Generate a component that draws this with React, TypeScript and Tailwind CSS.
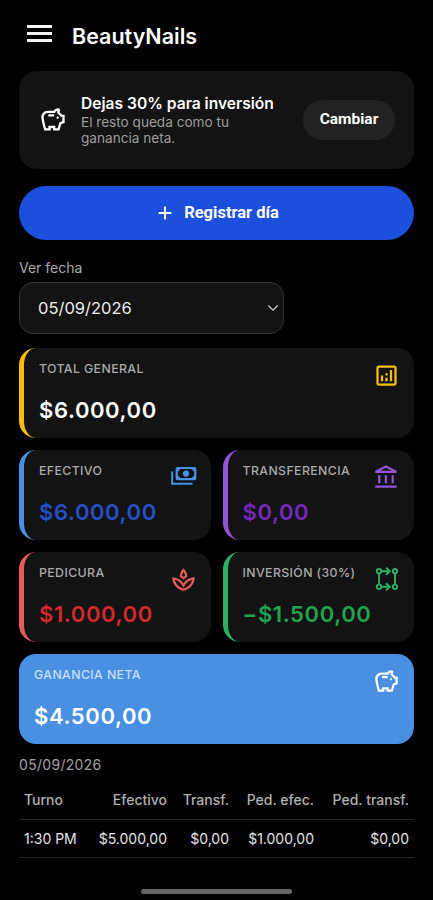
import { ReactNode } from "react";
import {
  MdAdd,
  MdOutlineAccountBalance,
  MdOutlineAnalytics,
  MdOutlineSavings,
  MdOutlineSpa,
} from "react-icons/md";

const PaymentsIcon = () => (
  <svg viewBox="0 0 26 26" className="h-[26px] w-[26px]" fill="none">
    <path d="M1.2 7.5v12.2h20.3" stroke="currentColor" strokeWidth="2" />
    <path
      fill="currentColor"
      fillRule="evenodd"
      d="M6.6 3h16.8q2 0 2 2v9.2q0 2-2 2H6.6q-2 0-2-2V5q0-2 2-2ZM9.4 5.1 6.8 7.7v3.8l2.6 2.6h11.2l2.6-2.6V7.7l-2.6-2.6Z"
    />
    <circle cx="15" cy="9.6" r="3.1" fill="currentColor" />
  </svg>
);

const FlowIcon = () => (
  <svg
    viewBox="0 0 26 26"
    className="h-[26px] w-[26px]"
    fill="none"
    stroke="currentColor"
    strokeWidth="1.9"
  >
    <circle cx="5" cy="5.2" r="2.2" />
    <circle cx="21" cy="5.2" r="2.2" />
    <circle cx="5" cy="20.8" r="2.2" />
    <circle cx="21" cy="20.8" r="2.2" />
    <path d="M5 7.4v11.2M21 7.4v11.2M7.2 5.2H15M7.2 20.8H15" />
    <path d="m12 1.6 3.8 3.6L12 8.8M12 17.2l3.8 3.6-3.8 3.6" />
  </svg>
);

interface StatCardProps {
  label: string;
  amount: string;
  icon: ReactNode;
  cardClass: string;
  labelClass?: string;
  amountClass: string;
  iconClass: string;
}

const StatCard = ({
  label,
  amount,
  icon,
  cardClass,
  labelClass = "text-[#a9a9a9]",
  amountClass,
  iconClass,
}: StatCardProps) => (
  <div
    className={`flex h-[90px] justify-between rounded-[17px] pr-[14px] pl-[15px] ${cardClass}`}
  >
    <div className="pt-[13px] whitespace-nowrap">
      <div
        className={`text-[12.3px] leading-4 font-medium tracking-[0.4px] ${labelClass}`}
      >
        {label}
      </div>
      <div
        className={`mt-[19px] text-[22px] leading-7 font-semibold tracking-[0.6px] ${amountClass}`}
      >
        {amount}
      </div>
    </div>
    <div className={`-ml-8 pt-[14px] text-[27px] ${iconClass}`}>{icon}</div>
  </div>
);

const columns = ["Turno", "Efectivo", "Transf.", "Ped. efec.", "Ped. transf."];
const rows = [["1:30 PM", "$5.000,00", "$0,00", "$1.000,00", "$0,00"]];

const App = () => {
  return (
    <div className="flex h-[900px] w-[433px] flex-col overflow-hidden bg-black px-[19px] font-['Inter',sans-serif] text-white">
      <header className="flex h-[71px] shrink-0 items-center pl-2">
        <button className="mt-[-4px] flex w-[25px] flex-col gap-[4px]">
          <span className="h-[3px] w-full bg-[#f4f4f4]" />
          <span className="h-[3px] w-full bg-[#f4f4f4]" />
          <span className="h-[3px] w-full bg-[#f4f4f4]" />
        </button>
        <h1 className="ml-5 text-[21.5px] leading-7 font-semibold">
          BeautyNails
        </h1>
      </header>

      <section className="flex h-[98px] shrink-0 items-center rounded-[18px] bg-[#131313] pr-[19px] pl-5">
        <MdOutlineSavings className="h-[28px] w-[28px]" />
        <div className="ml-[14px] flex-1 whitespace-nowrap">
          <h2 className="text-[15.6px] leading-5 font-semibold">
            Dejas 30% para inversión
          </h2>
          <p className="text-[13.6px] leading-[16.5px] text-[#9d9d9d]">
            El resto queda como tu
            <br />
            ganancia neta.
          </p>
        </div>
        <button className="h-10 w-[92px] rounded-full bg-[#222222] font-['Roboto',sans-serif] text-[15.5px] font-bold">
          Cambiar
        </button>
      </section>

      <button className="mt-[17px] flex h-[54px] shrink-0 items-center justify-center gap-[8px] rounded-full bg-[#1c4fdc] font-['Roboto',sans-serif] text-[16.5px] font-bold">
        <MdAdd className="h-[22px] w-[22px]" />
        Registrar día
      </button>

      <label className="mt-[18px] text-[14px] leading-5 text-[#a9a9a9]">
        Ver fecha
      </label>
      <div className="mt-[4px] flex h-[52px] w-[265px] shrink-0 items-center justify-between rounded-[14px] border border-[#343434] bg-[#131313] pr-[4px] pl-[18px] text-[16.5px] text-[#ededed]">
        05/09/2026
        <svg viewBox="0 0 12 8" className="h-2 w-3" fill="none">
          <path d="m1.3 1.5 4.7 4.7 4.7-4.7" stroke="#d0d0d0" strokeWidth="1.2" />
        </svg>
      </div>

      <div className="mt-[14px] grid shrink-0 grid-cols-2 gap-x-[12px] gap-y-[12px]">
        <StatCard
          label="TOTAL GENERAL"
          amount="$6.000,00"
          icon={<MdOutlineAnalytics />}
          cardClass="col-span-2 border-l-[5px] border-[#f9bd0c] bg-[#131313]"
          amountClass="text-white"
          iconClass="text-[#f9bd0c]"
        />
        <StatCard
          label="EFECTIVO"
          amount="$6.000,00"
          icon={<PaymentsIcon />}
          cardClass="border-l-[5px] border-[#4a90e2] bg-[#131313]"
          amountClass="text-[#264fc5]"
          iconClass="text-[#4a90e2]"
        />
        <StatCard
          label="TRANSFERENCIA"
          amount="$0,00"
          icon={<MdOutlineAccountBalance />}
          cardClass="border-l-[5px] border-[#9254d8] bg-[#131313]"
          amountClass="text-[#7428bb]"
          iconClass="text-[#9254d8]"
        />
        <StatCard
          label="PEDICURA"
          amount="$1.000,00"
          icon={<MdOutlineSpa />}
          cardClass="border-l-[5px] border-[#e85b5b] bg-[#131313]"
          amountClass="text-[#d3292c]"
          iconClass="text-[#e85b5b]"
        />
        <StatCard
          label="INVERSIÓN (30%)"
          amount="−$1.500,00"
          icon={<FlowIcon />}
          cardClass="border-l-[5px] border-[#2fae65] bg-[#131313]"
          amountClass="text-[#20a351]"
          iconClass="text-[#2fae65]"
        />
        <StatCard
          label="GANANCIA NETA"
          amount="$4.500,00"
          icon={<MdOutlineSavings />}
          cardClass="col-span-2 bg-[#4a90e2]"
          labelClass="text-[#c6ddf6]"
          amountClass="text-white"
          iconClass="text-white"
        />
      </div>

      <p className="mt-[11px] text-[14px] leading-5 tracking-[0.3px] text-[#a0a0a0]">
        05/09/2026
      </p>
      <table className="mt-[5px] w-full table-fixed text-[14px] whitespace-nowrap">
        <colgroup>
          <col className="w-[64px]" />
          <col className="w-[89px]" />
          <col className="w-[62px]" />
          <col className="w-[85px]" />
          <col className="w-[95px]" />
        </colgroup>
        <thead>
          <tr className="h-[39px] border-b border-[#262626] text-[#b0b0b0]">
            {columns.map((column, i) => (
              <th
                key={column}
                className={`px-[5px] font-medium ${i === 0 ? "text-left" : "text-right"}`}
              >
                {column}
              </th>
            ))}
          </tr>
        </thead>
        <tbody>
          {rows.map((row) => (
            <tr key={row[0]} className="h-[38px] border-b border-[#262626] text-[#e4e4e4]">
              {row.map((cell, i) => (
                <td key={i} className={`px-[5px] ${i === 0 ? "text-left" : "text-right"}`}>
                  {cell}
                </td>
              ))}
            </tr>
          ))}
        </tbody>
      </table>

      <div className="mt-auto mb-[6px] h-[5px] w-[151px] shrink-0 self-center rounded-full bg-[#646464]" />
    </div>
  );
};

export default App;
